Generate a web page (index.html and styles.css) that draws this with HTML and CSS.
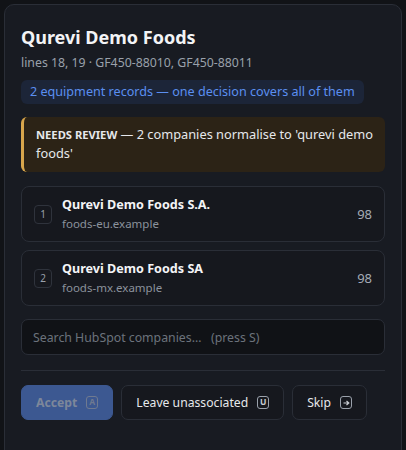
FILE: index.html
```html
<!DOCTYPE html>
<html>
<head>
<meta charset="utf-8">
<link rel="stylesheet" href="styles.css">
</head>
<body>
<div class="panel">
  <h1 class="title">Qurevi Demo Foods</h1>
  <div class="sub">lines 18, 19 · GF450-88010, GF450-88011</div>
  <div class="badge">2 equipment records — one decision covers all of them</div>
  <div class="alert"><b>NEEDS REVIEW</b> — 2 companies normalise to 'qurevi demo foods'</div>
  <div class="list">
    <div class="row">
      <span class="num">1</span>
      <div class="info">
        <div class="name">Qurevi Demo Foods S.A.</div>
        <div class="domain">foods-eu.example</div>
      </div>
      <span class="score">98</span>
    </div>
    <div class="row">
      <span class="num">2</span>
      <div class="info">
        <div class="name">Qurevi Demo Foods SA</div>
        <div class="domain">foods-mx.example</div>
      </div>
      <span class="score">98</span>
    </div>
  </div>
  <div class="search">Search HubSpot companies…&nbsp;&nbsp; (press S)</div>
  <div class="divider"></div>
  <div class="actions">
    <button class="btn primary">Accept <span class="kbd">A</span></button>
    <button class="btn">Leave unassociated <span class="kbd">U</span></button>
    <button class="btn">Skip <span class="kbd"><svg width="7" height="6" viewBox="0 0 7 6"><path d="M0.5 3H5.5M3.5 1L5.8 3L3.5 5" fill="none" stroke="#c8ccd2" stroke-width="1.2"/></svg></span></button>
  </div>
</div>
</body>
</html>
```
FILE: styles.css
```css
* { box-sizing: border-box; }
html, body { margin: 0; padding: 0; }
body {
  background: #111317;
  font-family: "Noto Sans", "Open Sans", sans-serif;
  color: #e6e8eb;
  padding: 4px;
  height: 450px;
  overflow: hidden;
}
.panel {
  background: #181b22;
  border: 1px solid #2a2e37;
  border-radius: 10px;
  padding: 19px 16px 40px;
  height: 460px;
}
.title {
  margin: 0;
  font-size: 18px;
  font-weight: 700;
  color: #f3f4f6;
  line-height: 26px;
}
.sub {
  margin-top: 5px;
  font-size: 12.3px;
  color: #9aa1ab;
  line-height: 16px;
}
.badge {
  display: inline-block;
  margin-top: 9px;
  padding: 3px 9px;
  background: #1c2538;
  color: #5b8ff0;
  font-size: 12.6px;
  line-height: 18px;
  border-radius: 6px;
}
.alert {
  margin-top: 13px;
  background: #2c2316;
  border-left: 3px solid #d8a64c;
  border-radius: 6px;
  padding: 8px 10px 9px 12px;
  font-size: 12.8px;
  line-height: 19px;
  color: #e6e8eb;
}
.alert b {
  font-size: 11.2px;
  font-weight: 700;
}
.list {
  margin-top: 14px;
  display: flex;
  flex-direction: column;
  gap: 8px;
}
.row {
  display: flex;
  align-items: center;
  border: 1px solid #2a2e37;
  border-radius: 8px;
  padding: 0 12px;
  height: 56px;
  background: #16181e;
}
.num {
  width: 18px;
  height: 19px;
  border: 1px solid #2f333c;
  border-radius: 4px;
  font-size: 10px;
  color: #9aa1ab;
  display: flex;
  align-items: center;
  justify-content: center;
  flex: none;
  margin-right: 10px;
}
.info { flex: 1; }
.name {
  font-size: 12.6px;
  font-weight: 700;
  color: #f3f4f6;
  line-height: 18px;
}
.domain {
  font-size: 11.5px;
  color: #8b929c;
  line-height: 18px;
  margin-top: 1px;
}
.score {
  font-size: 13px;
  color: #a4abb5;
}
.search {
  margin-top: 13px;
  height: 36px;
  background: #101216;
  border: 1px solid #2a2e37;
  border-radius: 7px;
  padding: 0 11px;
  display: flex;
  align-items: center;
  font-size: 12.3px;
  color: #6c727c;
}
.divider {
  margin-top: 15px;
  height: 1px;
  background: #2a2e37;
}
.actions {
  margin-top: 14px;
  display: flex;
  gap: 8px;
}
.btn {
  font-family: inherit;
  height: 35px;
  padding: 0 14px;
  background: #16181e;
  border: 1px solid #2a2e37;
  border-radius: 7px;
  color: #e6e8eb;
  font-size: 12.2px;
  display: flex;
  align-items: center;
  gap: 9px;
}
.btn.primary {
  background: #3c5891;
  border-color: #3c5891;
  color: #7d879a;
  font-weight: 700;
}
.kbd {
  display: inline-flex;
  align-items: center;
  justify-content: center;
  width: 12px;
  height: 13px;
  border: 1px solid #9aa1ab;
  border-radius: 3px;
  font-size: 8.5px;
  font-weight: 700;
  color: #c8ccd2;
  line-height: 1;
}
.primary .kbd {
  border-color: #6f7a90;
  color: #6f7a90;
}
```
